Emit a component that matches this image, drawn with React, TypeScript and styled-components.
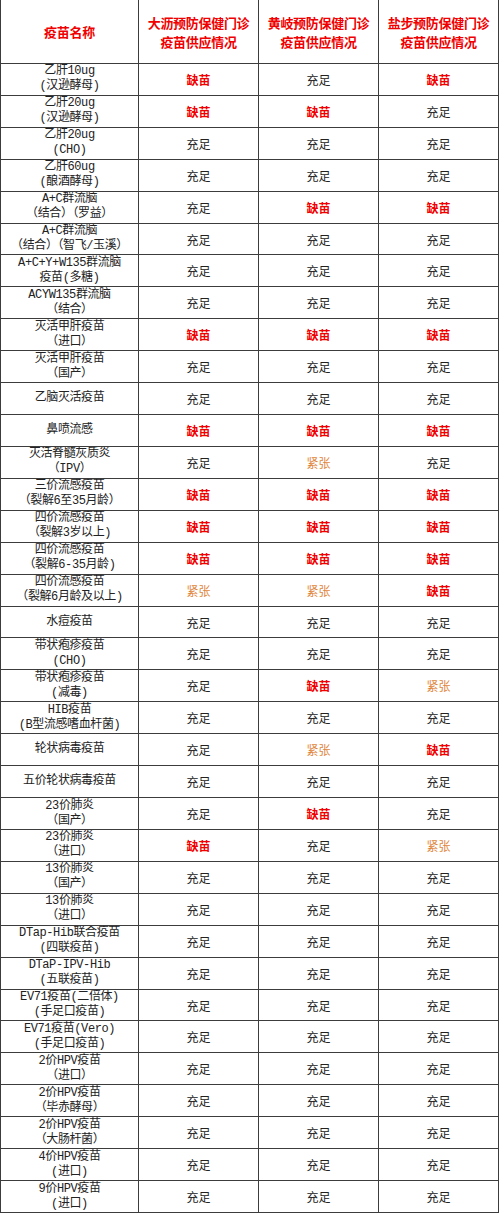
import React from 'react';
import styled, { createGlobalStyle } from 'styled-components';

type Status = '充足' | '缺苗' | '紧张';

const A: Status = '充足';
const Q: Status = '缺苗';
const J: Status = '紧张';

const clinics = ['大沥预防保健门诊', '黄岐预防保健门诊', '盐步预防保健门诊'];

const rows: { name: string[]; s: Status[] }[] = [
  { name: ['乙肝10ug', '(汉逊酵母)'], s: [Q, A, Q] },
  { name: ['乙肝20ug', '(汉逊酵母)'], s: [Q, Q, A] },
  { name: ['乙肝20ug', '(CHO)'], s: [A, A, A] },
  { name: ['乙肝60ug', '(酿酒酵母)'], s: [A, A, A] },
  { name: ['A+C群流脑', '（结合）（罗益）'], s: [A, Q, Q] },
  { name: ['A+C群流脑', '（结合）（智飞/玉溪）'], s: [A, A, A] },
  { name: ['A+C+Y+W135群流脑', '疫苗(多糖)'], s: [A, A, A] },
  { name: ['ACYW135群流脑', '（结合）'], s: [A, A, A] },
  { name: ['灭活甲肝疫苗', '（进口）'], s: [Q, Q, Q] },
  { name: ['灭活甲肝疫苗', '（国产）'], s: [A, A, A] },
  { name: ['乙脑灭活疫苗'], s: [A, A, A] },
  { name: ['鼻喷流感'], s: [Q, Q, Q] },
  { name: ['灭活脊髓灰质炎', '（IPV）'], s: [A, J, A] },
  { name: ['三价流感疫苗', '（裂解6至35月龄）'], s: [Q, Q, Q] },
  { name: ['四价流感疫苗', '（裂解3岁以上)'], s: [Q, Q, Q] },
  { name: ['四价流感疫苗', '（裂解6-35月龄)'], s: [Q, Q, Q] },
  { name: ['四价流感疫苗', '（裂解6月龄及以上)'], s: [J, J, Q] },
  { name: ['水痘疫苗'], s: [A, A, A] },
  { name: ['带状疱疹疫苗', '(CHO)'], s: [A, A, A] },
  { name: ['带状疱疹疫苗', '(减毒)'], s: [A, Q, J] },
  { name: ['HIB疫苗', '(B型流感嗜血杆菌)'], s: [A, A, A] },
  { name: ['轮状病毒疫苗'], s: [A, J, Q] },
  { name: ['五价轮状病毒疫苗'], s: [A, A, A] },
  { name: ['23价肺炎', '（国产）'], s: [A, Q, A] },
  { name: ['23价肺炎', '（进口）'], s: [Q, A, J] },
  { name: ['13价肺炎', '（国产）'], s: [A, A, A] },
  { name: ['13价肺炎', '（进口）'], s: [A, A, A] },
  { name: ['DTap-Hib联合疫苗', '(四联疫苗)'], s: [A, A, A] },
  { name: ['DTaP-IPV-Hib', '(五联疫苗)'], s: [A, A, A] },
  { name: ['EV71疫苗(二倍体)', '(手足口疫苗)'], s: [A, A, A] },
  { name: ['EV71疫苗(Vero)', '(手足口疫苗)'], s: [A, A, A] },
  { name: ['2价HPV疫苗', '（进口）'], s: [A, A, A] },
  { name: ['2价HPV疫苗', '（毕赤酵母）'], s: [A, A, A] },
  { name: ['2价HPV疫苗', '（大肠杆菌）'], s: [A, A, A] },
  { name: ['4价HPV疫苗', '(进口)'], s: [A, A, A] },
  { name: ['9价HPV疫苗', '(进口)'], s: [A, A, A] },
];

const GlobalStyle = createGlobalStyle`
  html, body {
    margin: 0;
    padding: 0;
    background: #fff;
  }
  body {
    font-family: "Liberation Mono", "Noto Sans CJK SC", monospace;
  }
`;

const Table = styled.div`
  width: 499px;
  height: 1213px;
  box-sizing: border-box;
  padding: 0 1px 1px 1px;
  background: #3c3c3c;
  display: grid;
  grid-template-columns: 137px 119px 119px 119px;
  grid-template-rows: 63px repeat(36, 1fr);
  gap: 1px;
`;

const Cell = styled.div`
  background: #fff;
  display: flex;
  flex-direction: column;
  align-items: center;
  justify-content: center;
  text-align: center;
  overflow: hidden;
`;

const HeadCell = styled(Cell)`
  color: #f00000;
  font-family: "Noto Sans CJK SC", sans-serif;
  font-weight: 700;
  font-size: 13px;
  line-height: 19px;
  letter-spacing: -0.3px;
`;

const NameCell = styled(Cell)`
  color: #222;
  font-size: 12px;
  line-height: 15px;
  white-space: nowrap;
  letter-spacing: -0.4px;
`;

const statusColor: Record<Status, string> = {
  充足: '#222',
  缺苗: '#f00000',
  紧张: '#e0853a',
};

const StatusCell = styled(Cell)<{ $status: Status }>`
  color: ${(p) => statusColor[p.$status]};
  font-family: "Noto Sans CJK SC", sans-serif;
  font-size: 12px;
  font-weight: ${(p) => (p.$status === '缺苗' ? 700 : 400)};
`;

export default function App() {
  return (
    <>
      <GlobalStyle />
      <Table>
        <HeadCell>疫苗名称</HeadCell>
        {clinics.map((c) => (
          <HeadCell key={c}>
            <span>{c}</span>
            <span>疫苗供应情况</span>
          </HeadCell>
        ))}
        {rows.map((r, i) => (
          <React.Fragment key={i}>
            <NameCell>
              {r.name.map((line) => (
                <span key={line}>{line}</span>
              ))}
            </NameCell>
            {r.s.map((st, j) => (
              <StatusCell key={j} $status={st}>
                {st}
              </StatusCell>
            ))}
          </React.Fragment>
        ))}
      </Table>
    </>
  );
}
